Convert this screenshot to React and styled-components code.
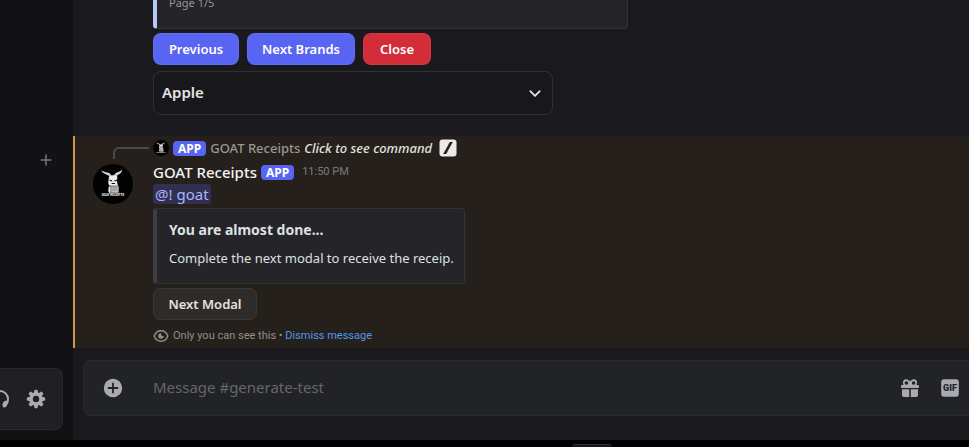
import React from "react";
import styled, { createGlobalStyle, css } from "styled-components";

const GlobalStyle = createGlobalStyle`
  * { box-sizing: border-box; }
  body {
    margin: 0;
    background: #000;
    color: #dfe0e2;
    font-family: "Noto Sans", Roboto, sans-serif;
    font-size: 13px;
    line-height: 18px;
  }
  button, input, select { font: inherit; }
  svg { display: block; flex: none; }
`;

const Window = styled.div`
  display: flex;
  flex-direction: column;
  height: 100vh;
  overflow: hidden;
`;

const Workspace = styled.div`
  display: flex;
  flex: 1;
  min-height: 0;
`;

const Sidebar = styled.aside`
  display: flex;
  flex-direction: column;
  justify-content: space-between;
  flex: none;
  width: 73px;
  padding: 152px 10px 10px 0;
  background: #121214;
`;

const IconButton = styled.button`
  display: flex;
  align-items: center;
  justify-content: center;
  flex: none;
  width: ${(p) => p.$size || 24}px;
  height: ${(p) => p.$size || 24}px;
  padding: 0;
  border: 0;
  background: none;
  color: ${(p) => p.$color || "#aaaab1"};
  cursor: pointer;
`;

const ChannelAction = styled.div`
  display: flex;
  justify-content: flex-end;
  padding-right: 9px;
`;

const UserPanel = styled.div`
  display: flex;
  align-items: center;
  justify-content: flex-end;
  gap: 14px;
  height: 62px;
  padding-right: 14px;
  overflow: hidden;
  border: 1px solid #29292d;
  border-left: 0;
  border-radius: 0 8px 8px 0;
  background: #202024;
`;

const Chat = styled.main`
  display: flex;
  flex-direction: column;
  justify-content: flex-end;
  flex: 1;
  min-width: 0;
  overflow: hidden;
  background: #1a1a1e;
`;

const Message = styled.article`
  display: flex;
  flex-direction: column;
  align-items: flex-start;
  flex: none;
  padding-left: 80px;
  ${(p) =>
    p.$mentioned &&
    css`
      margin-top: 21px;
      padding: 3px 0 4px 18px;
      border-left: 2px solid #d19753;
      background: #25201c;
    `}
`;

const Embed = styled.section`
  display: flex;
  flex-direction: column;
  gap: 9px;
  width: ${(p) => p.$width}px;
  max-width: 100%;
  padding: ${(p) => p.$pad || "11px 12px 16px"};
  border: 1px solid #323238;
  border-left: 4px solid ${(p) => p.$accent};
  border-radius: 4px;
  background: #242429;
`;

const EmbedTitle = styled.h3`
  margin: 0;
  font-size: 14px;
  font-weight: 700;
  line-height: 20px;
`;

const EmbedText = styled.p`
  margin: 0;
  white-space: nowrap;
`;

const EmbedFooter = styled.footer`
  color: #94959c;
  font-size: 11px;
  line-height: 16px;
`;

const ButtonRow = styled.div`
  display: flex;
  gap: 8px;
  margin-top: 4px;
`;

const tones = {
  primary: "#5865f2",
  danger: "#d22d39",
  neutral: "#2f2b29",
};

const ActionButton = styled.button`
  width: ${(p) => p.$width}px;
  height: 32px;
  padding: 0;
  border: 1px solid rgba(255, 255, 255, 0.06);
  border-radius: 8px;
  background: ${(p) => tones[p.$tone]};
  color: ${(p) => (p.$tone === "neutral" ? "#e4e3e2" : "#fff")};
  font-weight: 600;
  white-space: nowrap;
  cursor: pointer;
`;

const SelectBox = styled.label`
  display: grid;
  align-items: center;
  width: 400px;
  height: 44px;
  margin-top: 6px;
  color: #e4e4e6;

  & > * { grid-area: 1 / 1; }
  & > svg { justify-self: end; margin-right: 10px; pointer-events: none; }
`;

const Select = styled.select`
  appearance: none;
  width: 100%;
  height: 100%;
  padding: 0 36px 2px 8px;
  border: 1px solid #303035;
  border-radius: 8px;
  background: #18181c;
  color: inherit;
  font-size: 15px;
  font-weight: 600;
`;

const AvatarColumn = styled.div`
  display: flex;
  flex-direction: column;
  flex: none;
  width: 60px;
`;

const MessageLayout = styled.div`
  display: flex;
  width: 100%;
`;

const ReplySpine = styled.div`
  width: 36px;
  height: 12px;
  margin: 8px 0 5px 20px;
  border: 2px solid #4d4a49;
  border-width: 2px 0 0 2px;
  border-radius: 6px 0 0 0;
`;

const MessageBody = styled.div`
  display: flex;
  flex-direction: column;
  align-items: flex-start;
  flex: 1;
  min-width: 0;
`;

const ReplyRow = styled.div`
  display: flex;
  align-items: center;
  gap: 4px;
  height: 18px;
  white-space: nowrap;
`;

const Tag = styled.span`
  height: 15px;
  padding: 0 5px;
  border-radius: 4px;
  background: #5865f2;
  color: #fff;
  font-size: 12px;
  font-weight: 700;
  line-height: 15px;
`;

const ReplyAuthor = styled.span`
  color: #999694;
  font-weight: 500;
`;

const ReplyLink = styled.a`
  display: flex;
  align-items: center;
  gap: 7px;
  color: #e2e0df;
  font-style: italic;
  font-weight: 500;
  text-decoration: none;
`;

const Header = styled.header`
  display: flex;
  align-items: center;
  gap: 4px;
  height: 22px;
  margin-top: 4px;
  white-space: nowrap;
`;

const Author = styled.h2`
  margin: 0;
  color: #f3f3f3;
  font-size: 15px;
  font-weight: 500;
  line-height: 22px;
`;

const Time = styled.time`
  margin-left: 4px;
  color: #7d7b7e;
  font-family: Roboto, sans-serif;
  font-size: 11px;
`;

const Mention = styled.a`
  height: 20px;
  margin: 1px 0 4px;
  padding: 0 2px;
  border-radius: 3px;
  background: #313052;
  color: #a9b5fb;
  font-size: 15px;
  line-height: 20px;
  text-decoration: none;
`;

const Notice = styled.footer`
  display: flex;
  align-items: center;
  gap: 4px;
  height: 16px;
  margin-top: 8px;
  color: #918e8d;
  font-family: Roboto, sans-serif;
  font-size: 11px;
  line-height: 16px;
  white-space: nowrap;
`;

const NoticeLink = styled.a`
  color: #5197ed;
  text-decoration: none;
`;

const Composer = styled.form`
  display: flex;
  align-items: center;
  flex: none;
  height: 56px;
  margin: 12px 0 24px 10px;
  padding: 0 7px 0 17px;
  border: 1px solid #2a2b2f;
  border-right: 0;
  border-radius: 8px 0 0 8px;
  background: #222327;
`;

const ComposerInput = styled.input`
  flex: 1;
  min-width: 0;
  height: 22px;
  padding: 0;
  margin: 0 16px 2px 28px;
  border: 0;
  outline: 0;
  background: none;
  color: #dfe0e2;
  font-size: 15px;

  &::placeholder { color: #65666c; opacity: 1; }
`;

const ComposerTools = styled.div`
  display: flex;
  gap: 16px;
`;

const BottomBar = styled.div`
  display: flex;
  align-items: flex-end;
  flex: none;
  height: 7px;
  padding-left: 59%;
  background: #000;
`;

const BarHandle = styled.span`
  width: 40px;
  height: 3px;
  border-top: 1px solid #303030;
  border-radius: 4px 4px 0 0;
  background: #151515;
`;

function GoatAvatar({ size }) {
  return (
    <svg width={size} height={size} viewBox="0 0 40 40" role="img" aria-label="GOAT Receipts">
      <circle cx="20" cy="20" r="20" fill="#020202" />
      <path d="M8.5 6.2c.4 2.800 4 3.600 8.600 6l1-1.200c-1.600-3.200-5.600-2-9.600-4.800zM29.200 5.400c-.2 3.600-3 5-6.800 7l-1.200-1c.6-3.600 5.600-2.800 8-6z" fill="#d8d8d8" />
      <path d="M16 12.600l2-1.400h4.400l2 1.400-.4 3.800.4 3.600 1.400 3v6H16.400l-1.200-2 .8-5.400-.8-3z" fill="#ededed" />
      <path d="M16.600 15.400l2.600 1v1.200l-2.400-.6zM24 15.400l-2.600 1v1.200l2.400-.6zM18.600 19h3.400v1h-3.400zM15.800 21.400h1.800v1.200h-1.800z" fill="#111" />
      <path d="M17.8 22h8v7h-8z" fill="#bdbdbd" stroke="#333" strokeWidth=".6" />
      <path d="M19.2 24h5M19.2 26h5" stroke="#777" strokeWidth=".7" />
      <text x="20" y="32" textAnchor="middle" fill="#eee" fontFamily="Roboto, sans-serif" fontSize="3" fontWeight="900">GOAT RECEIPTS</text>
    </svg>
  );
}

function PlusIcon() {
  return (
    <svg width="12" height="12" viewBox="0 0 12 12" fill="none" stroke="currentColor" strokeWidth="1.5">
      <path d="M6 .5v11M.5 6h11" />
    </svg>
  );
}

function HeadphonesIcon() {
  return (
    <svg width="20" height="20" viewBox="0 0 20 20" fill="none" stroke="currentColor">
      <path d="M2 14v-4a8 8 0 0 1 16 0c0 1.600-.4 3.200-1.200 4.600" strokeWidth="2" />
      <path d="M13.200 13.400c1.200-2 3.600-2.200 4.600-1 .9 1.600-1.400 6-3.200 6.200-2 0-2.800-2.800-1.400-5.200zM6.800 13.400c-1.200-2-3.600-2.200-4.600-1-.9 1.600 1.400 6 3.200 6.200 2 0 2.800-2.800 1.400-5.200z" fill="currentColor" stroke="none" />
    </svg>
  );
}

function GearIcon() {
  return (
    <svg width="20" height="20" viewBox="0 0 20 20" fill="currentColor">
      {[0, 45, 90, 135].map((angle) => (
        <path key={angle} d="M8.3 1.6L9 .8h2l.7.8.5 3.200H7.800zM8.300 18.400l.7.8h2l.7-.8.5-3.200H7.800z" transform={`rotate(${angle} 10 10)`} />
      ))}
      <circle cx="10" cy="10" r="5" fill="none" stroke="currentColor" strokeWidth="3.6" />
    </svg>
  );
}

function ChevronIcon() {
  return (
    <svg width="16" height="16" viewBox="0 0 16 16" fill="none" stroke="currentColor" strokeWidth="1.8" strokeLinecap="round" strokeLinejoin="round">
      <path d="M3.3 6.2L8 10.8l4.7-4.6" />
    </svg>
  );
}

function SlashIcon() {
  return (
    <svg width="18" height="18" viewBox="0 0 18 18">
      <rect x=".5" y=".5" width="17" height="17" rx="3" fill="#ecebea" />
      <path d="M4.200 15L7.200 15L13.800 3L10.800 3z" fill="#25201c" />
    </svg>
  );
}

function EyeIcon() {
  return (
    <svg width="16" height="16" viewBox="0 0 16 16">
      <path d="M1.200 8c1.200-3.400 3.800-5.200 6.800-5.200s5.600 1.800 6.800 5.200c-1.200 3.400-3.800 5.200-6.800 5.200S2.400 11.400 1.200 8z" fill="none" stroke="currentColor" strokeWidth="1.4" />
      <path d="M8 5.200A2.800 2.800 0 1 0 10.800 8C9.500 8.600 7.600 7.200 8 5.200z" fill="currentColor" />
    </svg>
  );
}

function AttachIcon() {
  return (
    <svg width="20" height="20" viewBox="0 0 20 20">
      <circle cx="10" cy="10" r="9.200" fill="currentColor" />
      <path d="M10 5.500v9M5.500 10h9" stroke="#222327" strokeWidth="1.800" strokeLinecap="round" />
    </svg>
  );
}

function GiftIcon() {
  return (
    <svg width="20" height="20" viewBox="0 0 20 20">
      <path d="M3.500 7C2 3.800 3.600 1.300 6 1.300c1.800 0 3 1 4 2.200 1-1.200 2.200-2.200 4-2.200 2.400 0 4 2.500 2.500 5.700h1.300c.7 0 1.200.5 1.200 1.200V10H1V8.200C1 7.500 1.500 7 2.200 7z" fill="currentColor" />
      <path d="M2 11.300h7.200V19H4a2 2 0 0 1-2-2zM10.800 11.300H18V17a2 2 0 0 1-2 2h-5.200z" fill="currentColor" />
      <circle cx="6.400" cy="5" r="1.800" fill="#222327" />
      <circle cx="13.600" cy="5" r="1.800" fill="#222327" />
    </svg>
  );
}

function GifIcon() {
  return (
    <svg width="20" height="20" viewBox="0 0 20 20">
      <rect x="1.200" y="1.200" width="17.600" height="17.600" rx="3" fill="currentColor" />
      <text x="10" y="13" textAnchor="middle" fill="#222327" fontFamily="Roboto, sans-serif" fontSize="9" fontWeight="900">GIF</text>
    </svg>
  );
}

export default function App() {
  return (
    <Window>
      <GlobalStyle />
      <Workspace>
        <Sidebar>
          <ChannelAction>
            <IconButton $size={16} $color="#77777d" aria-label="Create channel"><PlusIcon /></IconButton>
          </ChannelAction>
          <UserPanel>
            <IconButton $size={20} aria-label="Deafen"><HeadphonesIcon /></IconButton>
            <IconButton $size={24} aria-label="User settings"><GearIcon /></IconButton>
          </UserPanel>
        </Sidebar>
        <Chat>
          <Message>
            <Embed $width={475} $accent="#b9c8fa" $pad="12px 12px 17px">
              <EmbedFooter>Page 1/5</EmbedFooter>
            </Embed>
            <ButtonRow>
              <ActionButton $tone="primary" $width={86}>Previous</ActionButton>
              <ActionButton $tone="primary" $width={108}>Next Brands</ActionButton>
              <ActionButton $tone="danger" $width={68}>Close</ActionButton>
            </ButtonRow>
            <SelectBox>
              <Select aria-label="Brand" defaultValue="Apple">
                <option>Apple</option>
              </Select>
              <ChevronIcon />
            </SelectBox>
          </Message>
          <Message $mentioned>
            <MessageLayout>
              <AvatarColumn>
                <ReplySpine />
                <GoatAvatar size={40} />
              </AvatarColumn>
              <MessageBody>
                <ReplyRow>
                  <GoatAvatar size={16} />
                  <Tag>APP</Tag>
                  <ReplyAuthor>GOAT Receipts</ReplyAuthor>
                  <ReplyLink href="#command">Click to see command <SlashIcon /></ReplyLink>
                </ReplyRow>
                <Header>
                  <Author>GOAT Receipts</Author>
                  <Tag>APP</Tag>
                  <Time>11:50 PM</Time>
                </Header>
                <Mention href="#goat">@! goat</Mention>
                <Embed $width={312} $accent="#3d3c42">
                  <EmbedTitle>You are almost done...</EmbedTitle>
                  <EmbedText>Complete the next modal to receive the receip.</EmbedText>
                </Embed>
                <ButtonRow>
                  <ActionButton $tone="neutral" $width={104}>Next Modal</ActionButton>
                </ButtonRow>
                <Notice>
                  <EyeIcon />
                  <span>Only you can see this • <NoticeLink href="#dismiss">Dismiss message</NoticeLink></span>
                </Notice>
              </MessageBody>
            </MessageLayout>
          </Message>
          <Composer>
            <IconButton type="button" aria-label="Add attachment"><AttachIcon /></IconButton>
            <ComposerInput aria-label="Message" placeholder="Message #generate-test" />
            <ComposerTools>
              <IconButton type="button" aria-label="Send a gift"><GiftIcon /></IconButton>
              <IconButton type="button" aria-label="Open GIF picker"><GifIcon /></IconButton>
            </ComposerTools>
          </Composer>
        </Chat>
      </Workspace>
      <BottomBar><BarHandle /></BottomBar>
    </Window>
  );
}
